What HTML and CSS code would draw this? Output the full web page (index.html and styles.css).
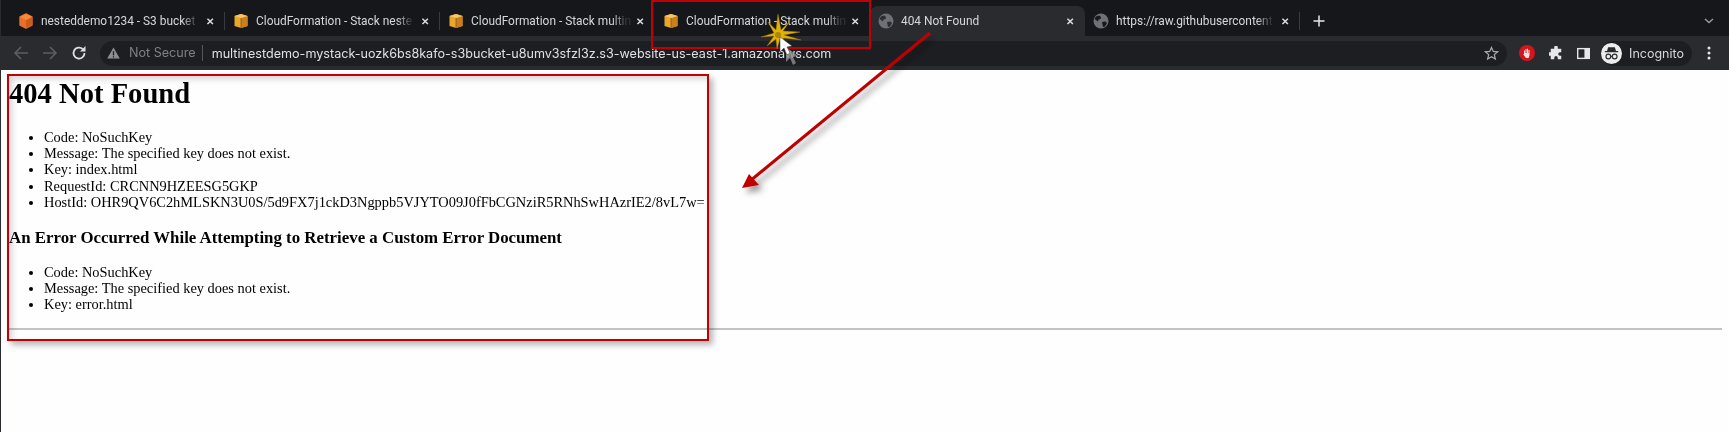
FILE: index.html
```html
<!DOCTYPE html>
<html lang="en">
<head>
    <meta charset="UTF-8">
    <meta name="viewport" content="width=device-width, initial-scale=1.0">
    <title>404 Not Found</title>
    <link rel="stylesheet" href="styles.css">
</head>
<body>
    <header class="chrome">
        <div class="tabstrip">
            <div class="tab">
                <svg class="favicon" viewBox="0 0 16 16"><path d="M8 1l6 3v8l-6 3-6-3V4z" fill="#e8702a" stroke="#e8702a" stroke-width="1.400" stroke-linejoin="round"/><path d="M8 7l6-3v8l-6 3z" fill="#d05a1c"/><path d="M8 1l6 3-6 3-6-3z" fill="#f58a3c"/></svg>
                <span class="tab_title">nesteddemo1234 - S3 bucket</span>
                <span class="tab_close">&#x2715;</span>
            </div>
            <div class="tab sep">
                <svg class="favicon" viewBox="0 0 16 16"><path d="M1.500 3L8 1l6.500 2v10L8 15l-6.500-2z" fill="#eda62c"/><path d="M8 5v10l6.500-2V3z" fill="#c9801c"/><path d="M1.500 3L8 5l6.500-2L8 1z" fill="#f6c667"/><path d="M8 5v10" stroke="#7a4f10" stroke-width=".7"/></svg>
                <span class="tab_title">CloudFormation - Stack neste</span>
                <span class="tab_close">&#x2715;</span>
            </div>
            <div class="tab sep">
                <svg class="favicon" viewBox="0 0 16 16"><path d="M1.500 3L8 1l6.500 2v10L8 15l-6.500-2z" fill="#eda62c"/><path d="M8 5v10l6.500-2V3z" fill="#c9801c"/><path d="M1.500 3L8 5l6.500-2L8 1z" fill="#f6c667"/><path d="M8 5v10" stroke="#7a4f10" stroke-width=".7"/></svg>
                <span class="tab_title">CloudFormation - Stack multin</span>
                <span class="tab_close">&#x2715;</span>
            </div>
            <div class="tab">
                <svg class="favicon" viewBox="0 0 16 16"><path d="M1.500 3L8 1l6.500 2v10L8 15l-6.500-2z" fill="#eda62c"/><path d="M8 5v10l6.500-2V3z" fill="#c9801c"/><path d="M1.500 3L8 5l6.500-2L8 1z" fill="#f6c667"/><path d="M8 5v10" stroke="#7a4f10" stroke-width=".7"/></svg>
                <span class="tab_title">CloudFormation - Stack multin</span>
                <span class="tab_close">&#x2715;</span>
            </div>
            <div class="tab active">
                <svg class="favicon" viewBox="0 0 16 16"><circle cx="8" cy="8" r="7.500" fill="#6d7075"/><path d="M3 3.500l3-1 2 1.500-.5 2-2 .5-.5 2-2-1.500-1.500-1zM9 9l3.500-.5 1.500 1.500-2 3.500-2 .5-.5-2.500z" fill="#2c2d31"/></svg>
                <span class="tab_title">404 Not Found</span>
                <span class="tab_close">&#x2715;</span>
            </div>
            <div class="tab">
                <svg class="favicon" viewBox="0 0 16 16"><circle cx="8" cy="8" r="7.500" fill="#6d7075"/><path d="M3 3.500l3-1 2 1.500-.5 2-2 .5-.5 2-2-1.500-1.500-1zM9 9l3.500-.5 1.500 1.500-2 3.500-2 .5-.5-2.500z" fill="#17181b"/></svg>
                <span class="tab_title">https://raw.githubusercontent</span>
                <span class="tab_close">&#x2715;</span>
            </div>
            <div class="new_tab">
                <svg viewBox="0 0 12 12"><path d="M6 .5v11M.5 6h11" stroke="#e8e9eb" stroke-width="1.500"/></svg>
            </div>
            <svg class="tab_menu" viewBox="0 0 10 6"><path d="M1 1l4 3.500L9 1" fill="none" stroke="#9a9ca0" stroke-width="1.400"/></svg>
        </div>
        <div class="toolbar">
            <svg class="nav_icon" viewBox="0 0 16 16"><path d="M15 8H2M8 2L2 8l6 6" fill="none" stroke="#5c5e63" stroke-width="1.600"/></svg>
            <svg class="nav_icon" viewBox="0 0 16 16"><path d="M1 8h13M8 2l6 6-6 6" fill="none" stroke="#5c5e63" stroke-width="1.600"/></svg>
            <svg class="nav_icon" viewBox="0 0 16 16"><path d="M13.500 8A5.500 5.500 0 1 1 11.700 4" fill="none" stroke="#dfe0e3" stroke-width="1.800"/><path d="M14.500 1v5.500H9z" fill="#dfe0e3"/></svg>
            <div class="omnibox">
                <svg class="warn" viewBox="0 0 14 13"><path d="M7 .5L13.800 12.500H.2z" fill="#8d8f93"/><path d="M6.300 4.500h1.400v4.500H6.300zM6.300 10h1.400v1.300H6.300z" fill="#1d1e21"/></svg>
                <span class="not_secure">Not Secure</span>
                <span class="url">multinestdemo-mystack-uozk6bs8kafo-s3bucket-u8umv3sfzl3z.s3-website-us-east-1.amazonaws.com</span>
                <svg class="star" viewBox="0 0 16 16"><path d="M8 1.500l1.900 4.300 4.600.4-3.500 3 1.100 4.600L8 11.400l-4.100 2.400L5 9.200l-3.500-3 4.600-.4z" fill="none" stroke="#a9abaf" stroke-width="1.300"/></svg>
            </div>
            <div class="toolbar_right">
                <svg class="adblock" viewBox="0 0 16 16"><circle cx="8" cy="8" r="8" fill="#d5151c"/><path d="M5 8V5.500h1V8h.5V4h1v4H8V3.800h1V8h.5V5h1v5.500L9.500 13H7L4.300 9.500l.7-.8z" fill="#f6e4e4"/></svg>
                <svg class="ext" viewBox="0 0 16 16"><path d="M6 1.500a2 2 0 0 1 4 0V3h4v4h-1.500a2 2 0 0 0 0 4H14v4h-4v-1.500a2 2 0 0 0-4 0V15H2v-4H.5a2 2 0 0 1 0-4H2V3h4z" fill="#e6e7e9"/></svg>
                <svg class="panel" viewBox="0 0 14 14"><path d="M0 1h14v12H0z" fill="#e6e7e9"/><path d="M1.500 2.500h6.500v9H1.500z" fill="#26272b"/></svg>
                <div class="profile">
                    <svg class="incognito" viewBox="0 0 22 22"><circle cx="11" cy="11" r="11" fill="#eceded"/><path d="M7.500 4.500h7l1.200 4H18v1.300H4V8.500h2.300z" fill="#2a2b2f"/><circle cx="7.700" cy="14.200" r="2.500" fill="none" stroke="#2a2b2f" stroke-width="1.200"/><circle cx="14.300" cy="14.200" r="2.500" fill="none" stroke="#2a2b2f" stroke-width="1.200"/><path d="M10 14h2" stroke="#2a2b2f" stroke-width="1.200"/></svg>
                    <span>Incognito</span>
                </div>
                <svg class="dots" viewBox="0 0 4 14"><circle cx="2" cy="2" r="1.500" fill="#e6e7e9"/><circle cx="2" cy="7" r="1.500" fill="#e6e7e9"/><circle cx="2" cy="12" r="1.500" fill="#e6e7e9"/></svg>
            </div>
        </div>
    </header>

    <main class="error_page">
        <h1>404 Not Found</h1>
        <ul>
            <li>Code: NoSuchKey</li>
            <li>Message: The specified key does not exist.</li>
            <li>Key: index.html</li>
            <li>RequestId: CRCNN9HZEESG5GKP</li>
            <li>HostId: OHR9QV6C2hMLSKN3U0S/5d9FX7j1ckD3Ngppb5VJYTO09J0fFbCGNziR5RNhSwHAzrIE2/8vL7w=</li>
        </ul>
        <h3>An Error Occurred While Attempting to Retrieve a Custom Error Document</h3>
        <ul>
            <li>Code: NoSuchKey</li>
            <li>Message: The specified key does not exist.</li>
            <li>Key: error.html</li>
        </ul>
        <hr>
    </main>

    <!-- annotations drawn on top of the recording -->
    <div class="mark mark_tab"></div>
    <div class="mark mark_body"></div>
    <svg class="overlay" viewBox="0 0 1729 432">
        <defs>
            <filter id="soft" x="-20%" y="-20%" width="150%" height="150%">
                <feDropShadow dx="4" dy="5" stdDeviation="3" flood-color="#000" flood-opacity=".4"/>
            </filter>
        </defs>
        <g filter="url(#soft)">
            <path d="M930 33L750 181" stroke="#c00006" stroke-width="3"/>
            <path d="M742 188L749 174 759 185z" fill="#c00006"/>
        </g>
        <path d="M778 14L781 30 790 21 783 31 800 32 784 35 801 40 783 38 787 47 780 39 777 49 776 39 767 46 774 36 761 37 774 33 768 22 776 30z" fill="#e3b008" stroke="#9a7a08" stroke-width=".4"/>
        <circle cx="778" cy="35" r="3" fill="#a8860f"/>
        <path d="M786 47L786 62 790 58 793 65 796 63 793 57 798 56z" fill="#8d8f93" opacity=".8"/>
        <path d="M780 37L780 52 784 48 787 55 790 53 787 47 792 46z" fill="#fff" stroke="#333" stroke-width=".5"/>
    </svg>
</body>
</html>
```

FILE: styles.css
```css
* {
    box-sizing: border-box;
}

html, body {
    margin: 0;
    padding: 0;
}

body {
    width: 1729px;
    height: 432px;
    overflow: hidden;
    position: relative;
    background-color: #fefefe;
    border-left: 1px solid #2a2b2f;
    color: #000;
    font-family: "Liberation Serif", serif;
}

/* browser top */
.chrome {
    font-family: Inter, "Noto Sans", sans-serif;
    height: 70px;
    margin-left: -1px;
    filter: blur(.35px);
}

.tabstrip {
    height: 36px;
    padding: 6px 0 0 10px;
    background-color: #16171a;
    display: flex;
    align-items: stretch;
    position: relative;
}

.tab {
    width: 215px;
    padding: 0 6px 1px 8px;
    display: flex;
    align-items: center;
    position: relative;
}

.tab.sep::before {
    content: "";
    position: absolute;
    left: -1px;
    top: 6px;
    height: 18px;
    width: 1px;
    background-color: #3a3b40;
}

.tab.active {
    background-color: #2a2b2f;
    border-radius: 8px 8px 0 0;
}

.favicon {
    width: 16px;
    height: 16px;
    flex: none;
    margin-right: 7px;
}

.tab_title {
    flex: 1;
    font-family: Roboto, "Noto Sans", sans-serif;
    font-size: 11.900px;
    color: #d6d7da;
    white-space: nowrap;
    overflow: hidden;
    -webkit-mask-image: linear-gradient(to right, #000 88%, rgba(0, 0, 0, .15) 97%);
    mask-image: linear-gradient(to right, #000 88%, rgba(0, 0, 0, .15) 97%);
}

.tab_close {
    width: 18px;
    text-align: center;
    flex: none;
    font-size: 10px;
    font-weight: 700;
    color: #dcdde0;
}

.new_tab {
    width: 30px;
    display: flex;
    align-items: center;
    justify-content: center;
    margin-left: 4px;
    position: relative;
}

.new_tab::before {
    content: "";
    position: absolute;
    left: -5px;
    top: 6px;
    height: 18px;
    width: 1px;
    background-color: #3a3b40;
}

.new_tab svg {
    width: 12px;
    height: 12px;
}

.tab_menu {
    position: absolute;
    right: 15px;
    top: 18px;
    width: 10px;
    height: 6px;
}

.toolbar {
    height: 34px;
    background-color: #2a2b2f;
    display: flex;
    align-items: center;
    padding: 0 18px 0 13px;
}

.nav_icon {
    width: 16px;
    height: 16px;
    flex: none;
    margin-right: 13px;
}

.omnibox {
    flex: 1;
    height: 25px;
    background-color: #1d1e21;
    border-radius: 13px;
    display: flex;
    align-items: center;
    padding: 0 8px 0 7px;
    font-size: 12.6px;
}

.warn {
    width: 13px;
    height: 12px;
    flex: none;
}

.not_secure {
    color: #7e8084;
    margin-left: 9px;
    padding-right: 6px;
    border-right: 1px solid #55575b;
    line-height: 16px;
}

.url {
    color: #dfe0e3;
    margin-left: 9px;
    flex: 1;
    white-space: nowrap;
}

.star {
    width: 15px;
    height: 15px;
    flex: none;
}

.toolbar_right {
    display: flex;
    align-items: center;
    margin-left: 12px;
}

.adblock {
    width: 16px;
    height: 16px;
}

.ext {
    width: 14px;
    height: 14px;
    margin-left: 14px;
}

.panel {
    width: 13px;
    height: 13px;
    margin-left: 14.500px;
}

.profile {
    display: flex;
    align-items: center;
    gap: 7px;
    height: 25px;
    margin-left: 11px;
    padding: 0 8px 0 0;
    background-color: #1d1e21;
    border-radius: 13px;
    font-size: 12.5px;
    color: #d6d7da;
}

.incognito {
    width: 21px;
    height: 21px;
}

.dots {
    width: 4px;
    height: 14px;
    margin-left: 15px;
}

/* the s3 error page */
.error_page {
    padding: 8px 7px 0 8px;
    font-size: 14.4px;
    line-height: 16.2px;
    filter: blur(.25px);
}

.error_page h1 {
    margin: 0 0 19px;
    font-size: 28.600px;
    line-height: 32px;
}

.error_page ul {
    margin: 0;
    padding-left: 35px;
}

.error_page h3 {
    margin: 18px 0 17px;
    font-size: 16.850px;
    line-height: 19px;
}

.error_page hr {
    margin: 15px 0 0;
    height: 2px;
    border: 0;
    background-color: #c4c2c4;
}

/* red annotations */
.mark {
    position: absolute;
    border: 2px solid #c00006;
}

.mark_tab {
    left: 650px;
    top: 0;
    width: 220px;
    height: 49px;
}

.mark_body {
    left: 6px;
    top: 74px;
    width: 702px;
    height: 267px;
    box-shadow: 4px 4px 6px rgba(0, 0, 0, .28), inset 3px 3px 6px rgba(0, 0, 0, .16);
}

.overlay {
    position: absolute;
    left: -1px;
    top: 0;
    width: 1729px;
    height: 432px;
    pointer-events: none;
}
```
